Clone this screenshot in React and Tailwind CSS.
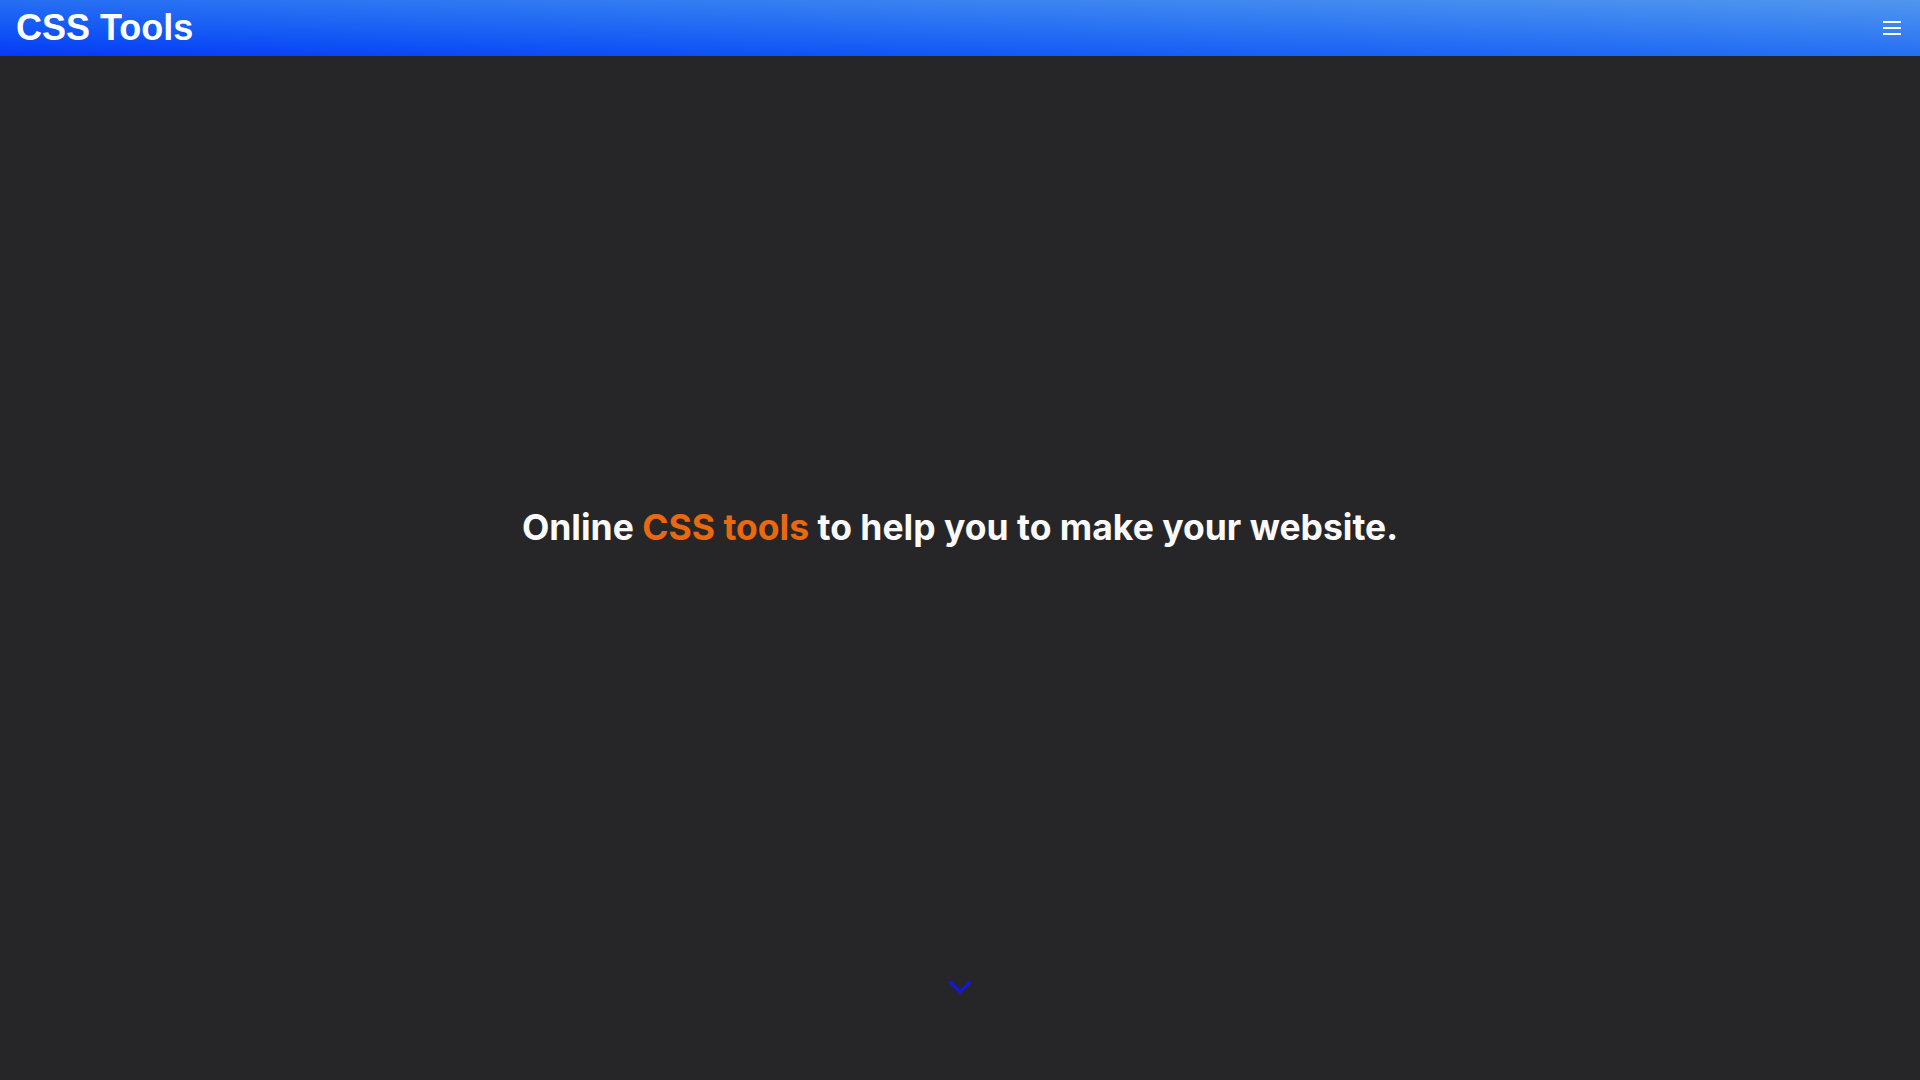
export default function App() {
  return (
    <div className="min-h-screen flex flex-col bg-[#262628]" style={{ fontFamily: "Inter, 'Liberation Sans', sans-serif" }}>
      <header className="h-[56px] flex items-center justify-between pl-[16px] pr-[19px] bg-gradient-to-tr from-[#0a38f6] to-[#5096ee]">
        <h1 className="text-[36px] font-bold text-white leading-none" style={{ fontFamily: "'Liberation Sans', Arial, sans-serif" }}>CSS Tools</h1>
        <button className="flex flex-col gap-[4px] w-[18px]">
          <span className="block h-[2px] bg-white" />
          <span className="block h-[2px] bg-white" />
          <span className="block h-[2px] bg-white" />
        </button>
      </header>
      <main className="flex-1 flex flex-col items-center">
        <div className="h-[450px]" />
        <p className="text-[35.5px] font-bold text-[#fafafa] leading-[44px]">
          Online <span className="text-[#e8690f]">CSS tools</span> to help you to make your website.
        </p>
        <div className="h-[430px]" />
        <svg width="24" height="14" viewBox="0 0 24 14" fill="none">
          <path d="M1.5 1.5 L12 12 L22.5 1.5" stroke="#1414f0" strokeWidth="3" />
        </svg>
      </main>
    </div>
  );
}
